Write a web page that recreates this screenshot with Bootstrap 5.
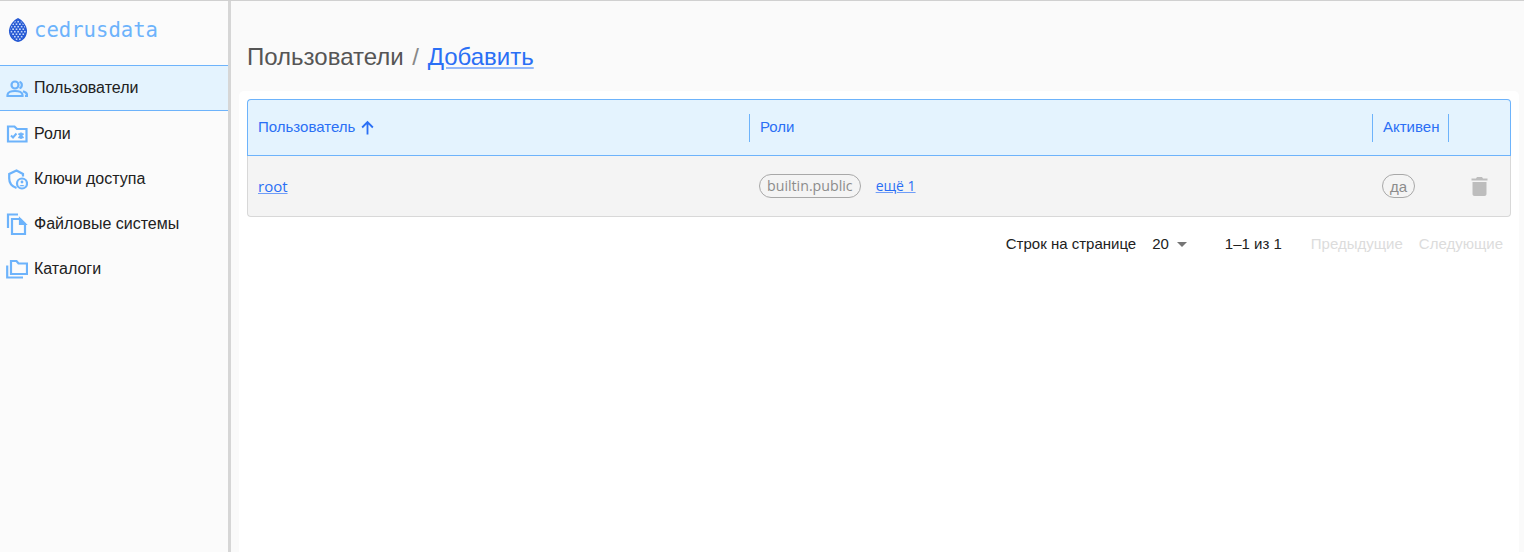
<!doctype html>
<html lang="ru">
<head>
<meta charset="utf-8">
<title>Пользователи</title>
<link href="https://cdn.jsdelivr.net/npm/bootstrap@5.3.0/dist/css/bootstrap.min.css" rel="stylesheet">
<style>
html,body{height:100%;overflow:hidden}
body{font-family:"Liberation Sans",Arial,sans-serif;background:#fafafa;color:#212121;border-top:1px solid #d0d0d0;font-size:16px}
.shell{height:551px}
.side{width:231px;flex:none;background:#fbfbfb;border-right:3px solid #d6d6d6}
.brand{height:64px;padding:0 8px 6px 8px;gap:6px}
.brand-name{font-family:"DejaVu Sans Mono",monospace;font-size:20.6px;color:#6db3fb;line-height:1}
.side-item{height:45.2px;padding-left:6px;gap:6px;color:#212121;text-decoration:none;line-height:1;border:0}
.side-item svg{flex:none;width:22px;height:22px}
.side-item.current{background:#e4f3fe;border-top:1px solid #6db3fb;border-bottom:1px solid #6db3fb;height:46px}
.head-title{height:90px;padding:41px 0 0 16px;margin:0;font-size:24px;line-height:30px;font-weight:400;color:#555}
.head-title a{color:#2a6ff5;text-decoration-color:#93b8fa}
.head-sep{color:#888;margin:0 2px}
.sheet{background:#fff;margin:0 5px 0 8px;padding:8px;border-radius:5px 5px 0 0;flex:1}
.grid-table{table-layout:fixed;width:100%;margin:0;font-size:15px;border-collapse:separate;border-spacing:0}
.grid-table th{height:57px;background:#e4f3fe;border-top:1px solid #6db3fb;border-bottom:1px solid #6db3fb;font-weight:400;color:#2a6ff5;padding:0;vertical-align:middle}
.grid-table th:first-child{border-left:1px solid #6db3fb;border-top-left-radius:4px}
.grid-table th:last-child{border-right:1px solid #6db3fb;border-top-right-radius:4px}
.th-inner{display:flex;align-items:center;height:28px;padding-left:10px;gap:5px}
.th-inner.divd{border-left:1px solid #6db3fb}
.th-inner.rdiv{border-right:1px solid #6db3fb;padding-right:8px}
.grid-table td{height:61px;background:#f4f4f4;padding:0 0 0 10px;vertical-align:middle;border-bottom:1px solid #d8d8d8;font-size:15px;font-family:"Open Sans","Liberation Sans",sans-serif}
.grid-table td:first-child{border-left:1px solid #d8d8d8;border-bottom-left-radius:4px}
.grid-table td:last-child{border-right:1px solid #d8d8d8;border-bottom-right-radius:4px;padding:0}
.grid-table a{color:#2a6ff5;text-decoration-color:#6f9df8}
.tag{display:inline-block;font-size:14.2px;line-height:21px;height:24px;color:#8c8c8c;border:1px solid #a8a8a8;border-radius:12px;padding:0 7px;font-family:"Open Sans","Liberation Sans",sans-serif}
.tag.ru{font-family:"Liberation Sans",sans-serif;line-height:24px;font-size:15px}
.more{margin-left:15px;font-size:14px}
.pager{font-size:15px;height:55px;padding-right:8px;color:#212121}
.pager .off{color:#dcdcdc}
.caret{width:0;height:0;border-left:5px solid transparent;border-right:5px solid transparent;border-top:5px solid #757575;margin-left:8px}
</style>
</head>
<body>
<div class="d-flex shell">
  <nav class="side d-flex flex-column">
    <div class="brand d-flex align-items-center">
      <svg width="20" height="24" viewBox="0 0 20 24" aria-hidden="true">
        <defs>
          <pattern id="scales" width="3.4" height="5" patternUnits="userSpaceOnUse">
            <circle cx="1.700" cy="1.200" r=".85" fill="#d5e3fd"/>
            <circle cx="0" cy="3.700" r=".85" fill="#d5e3fd"/>
            <circle cx="3.400" cy="3.700" r=".85" fill="#d5e3fd"/>
          </pattern>
        </defs>
        <path d="M10 0C5.500 2 1.500 7 1 12.500.6 18 5 23.500 10 24c5-.5 9.400-6 9-11.500C18.500 7 14.500 2 10 0z" fill="#2458d3"/>
        <path d="M10 1.500C6 3 2.500 8 2.200 12.500 2 17 6 22 10 22.800c4-.8 8-5.800 7.800-10.300C17.500 8 14 3 10 1.500z" fill="url(#scales)"/>
      </svg>
      <span class="brand-name">cedrusdata</span>
    </div>
    <a class="side-item current d-flex align-items-center" href="#">
      <svg viewBox="0 0 22 22" fill="none" stroke="#6db3fb" stroke-width="2.200"><circle cx="9" cy="8" r="3.500"/><path d="M1.500 19v-1c0-2.500 3.500-4 7.500-4s7.500 1.500 7.500 4v1z"/><path d="M13.500 4.700a3.500 3.500 0 0 1 0 6.600M17 14.300c2 .6 4 1.900 4 3.700v1h-2"/></svg>
      <span>Пользователи</span>
    </a>
    <a class="side-item d-flex align-items-center" href="#">
      <svg viewBox="0 0 22 22" fill="none" stroke="#6db3fb" stroke-width="2.200"><path d="M2 3.500h6.500l2.500 2.500h9.500v12.500H2z"/><path d="M5 12.500l2 2 3.500-4" stroke-width="2"/><path d="M12.500 10.500l5 4.500M17.500 10.500l-5 4.500M15 9.500v6.500" stroke-width="1.700"/></svg>
      <span>Роли</span>
    </a>
    <a class="side-item d-flex align-items-center" href="#">
      <svg viewBox="0 0 22 22" fill="none" stroke="#6db3fb" stroke-width="2.200"><path d="M10.500 20C6 18.500 3.200 15 3.200 10.500V6l7.300-3.500L17 6v2.500"/><circle cx="16" cy="15.500" r="5"/><circle cx="16" cy="14" r="1.400" fill="#6db3fb" stroke="none"/><path d="M13.300 18.200c.5-1.500 4.900-1.500 5.400 0z" fill="#6db3fb" stroke="none"/></svg>
      <span>Ключи доступа</span>
    </a>
    <a class="side-item d-flex align-items-center" href="#">
      <svg viewBox="0 0 22 22" fill="none" stroke="#6db3fb" stroke-width="2.200"><path d="M2 15V1.500h10"/><path d="M6 6h8l5 5v10H6z"/><path d="M14 6v5h5z" fill="#6db3fb"/></svg>
      <span>Файловые системы</span>
    </a>
    <a class="side-item d-flex align-items-center" href="#">
      <svg viewBox="0 0 22 22" fill="none" stroke="#6db3fb" stroke-width="2.200"><path d="M5 3h5.500l2 2.500H21v10.500H5z"/><path d="M1.200 7.500v12h15.800"/></svg>
      <span>Каталоги</span>
    </a>
  </nav>
  <main class="flex-grow-1 d-flex flex-column">
    <h1 class="head-title">Пользователи <span class="head-sep">/</span> <a href="#">Добавить</a></h1>
    <section class="sheet">
      <table class="grid-table">
        <colgroup><col style="width:502px"><col style="width:623px"><col style="width:77px"><col></colgroup>
        <thead>
          <tr>
            <th><div class="th-inner">Пользователь
              <svg width="15" height="15" viewBox="0 0 14 14" fill="none" stroke="#2a6ff5" stroke-width="1.700"><path d="M7 13.500V2M2 7l5-5 5 5"/></svg></div></th>
            <th><div class="th-inner divd">Роли</div></th>
            <th><div class="th-inner divd rdiv">Активен</div></th>
            <th></th>
          </tr>
        </thead>
        <tbody>
          <tr>
            <td><a href="#">root</a></td>
            <td><span class="tag">builtin.public</span><a class="more" href="#">ещё 1</a></td>
            <td><span class="tag ru">да</span></td>
            <td class="text-center">
              <svg width="17" height="19" viewBox="0 0 16 19" fill="#bdbdbd" class="d-block mx-auto"><path d="M5.500 0h5l1 1.500H16v2H0v-2h4.500z"/><path d="M1 5h14v12c0 1.100-.9 2-2 2H3c-1.100 0-2-.9-2-2z"/></svg>
            </td>
          </tr>
        </tbody>
      </table>
      <div class="pager d-flex align-items-center justify-content-end">
        <span>Строк на странице</span>
        <span class="ms-3">20</span><span class="caret"></span>
        <span style="margin-left:38px">1–1 из 1</span>
        <span class="off" style="margin-left:29px">Предыдущие</span>
        <span class="off ms-3">Следующие</span>
      </div>
    </section>
  </main>
</div>
<script src="https://cdn.jsdelivr.net/npm/bootstrap@5.3.0/dist/js/bootstrap.bundle.min.js"></script>
</body>
</html>
